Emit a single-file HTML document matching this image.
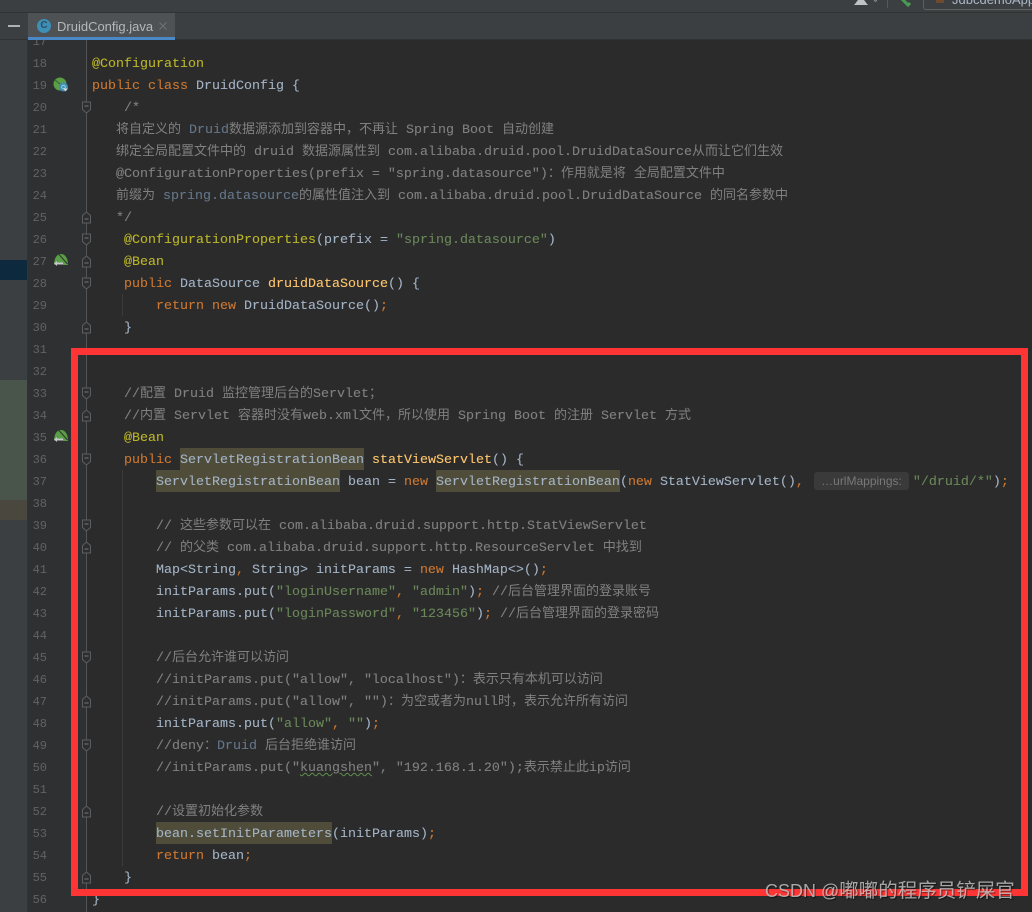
<!DOCTYPE html>
<html lang="zh">
<head>
<meta charset="utf-8">
<title>DruidConfig.java</title>
<style>
html,body{margin:0;padding:0;background:#2b2b2b}
#r{position:relative;width:1032px;height:912px;overflow:hidden;background:#2b2b2b;font-family:"Liberation Mono","DejaVu Sans Mono",monospace}
.abs{position:absolute}
#code{position:absolute;z-index:0;left:92px;top:54px;font-size:13.33px;line-height:22px;color:#a3b3c6;-webkit-text-stroke:.1px currentColor}
#code div{height:22px;white-space:pre}
#nums{position:absolute;left:27px;top:31px;width:20px;text-align:right;font-size:12px;line-height:22px;color:#606366}
#nums div{height:22px}
i{font-family:"Noto Sans CJK SC","WenQuanYi Zen Hei",sans-serif;font-style:normal;font-size:13px;line-height:0;-webkit-text-stroke:0;font-weight:400}
.k{color:#cc7832}.a{color:#bbb529}.s{color:#6a8759}.m{color:#ffc66d}.c{color:#808080}
.h{position:relative;display:inline-block;height:22px;line-height:22px;vertical-align:top}
.h::before{content:"";position:absolute;left:0;right:0;top:-2px;height:22px;background:#4f4d3a;z-index:-1}
.t{color:#64768a}
</style>
</head>
<body>
<div id="r">
<!-- left strip -->
<div class="abs" style="left:0;top:0;width:28px;height:912px;background:#3c3f41"></div>
<div class="abs" style="left:0;top:260px;width:27px;height:20px;background:#0d293e"></div>
<div class="abs" style="left:0;top:380px;width:27px;height:120px;background:#49544a"></div>
<div class="abs" style="left:0;top:500px;width:27px;height:20px;background:#49473e"></div>
<!-- gutter -->
<div class="abs" style="left:27px;top:40px;width:59px;height:872px;background:#2f3032"></div>
<div class="abs" style="left:27px;top:40px;width:1px;height:872px;background:#323232"></div>
<div id="nums">
<div>17</div><div>18</div><div>19</div><div>20</div><div>21</div><div>22</div><div>23</div><div>24</div><div>25</div><div>26</div><div>27</div><div>28</div><div>29</div><div>30</div><div>31</div><div>32</div><div>33</div><div>34</div><div>35</div><div>36</div><div>37</div><div>38</div><div>39</div><div>40</div><div>41</div><div>42</div><div>43</div><div>44</div><div>45</div><div>46</div><div>47</div><div>48</div><div>49</div><div>50</div><div>51</div><div>52</div><div>53</div><div>54</div><div>55</div><div>56</div>
</div>
<!-- guides -->
<div class="abs" style="left:86px;top:40px;width:1px;height:872px;background:#555"></div>
<div class="abs" style="left:122px;top:294px;width:1px;height:22px;background:#3b3b3b"></div>
<div class="abs" style="left:122px;top:470px;width:1px;height:396px;background:#3b3b3b"></div>
<!-- code -->
<div id="code">
<div><span class="a">@Configuration</span></div>
<div><span class="k">public class </span>DruidConfig {</div>
<div class="c">    /*</div>
<div class="c">   <i>将自定义的</i> <span class="t">Druid</span><i>数据源添加到容器中，不再让</i> Spring Boot <i>自动创建</i></div>
<div class="c">   <i>绑定全局配置文件中的</i> druid <i>数据源属性到</i> com.alibaba.druid.pool.DruidDataSource<i>从而让它们生效</i></div>
<div class="c">   @ConfigurationProperties(prefix = "spring.datasource")<i>：作用就是将</i> <i>全局配置文件中</i></div>
<div class="c">   <i>前缀为</i> <span class="t">spring.datasource</span><i>的属性值注入到</i> com.alibaba.druid.pool.DruidDataSource <i>的同名参数中</i></div>
<div class="c">   */</div>
<div>    <span class="a">@ConfigurationProperties</span>(prefix = <span class="s">"spring.datasource"</span>)</div>
<div>    <span class="a">@Bean</span></div>
<div>    <span class="k">public </span>DataSource <span class="m">druidDataSource</span>() {</div>
<div>        <span class="k">return new </span>DruidDataSource()<span class="k">;</span></div>
<div>    }</div>
<div> </div>
<div> </div>
<div class="c">    //<i>配置</i> Druid <i>监控管理后台的</i>Servlet<i>；</i></div>
<div class="c">    //<i>内置</i> Servlet <i>容器时没有</i>web.xml<i>文件，所以使用</i> Spring Boot <i>的注册</i> Servlet <i>方式</i></div>
<div>    <span class="a">@Bean</span></div>
<div>    <span class="k">public </span><span class="h">ServletRegistrationBean</span> <span class="m">statViewServlet</span>() {</div>
<div>        <span class="h">ServletRegistrationBean</span> bean = <span class="k">new </span><span class="h">ServletRegistrationBean</span>(<span class="k">new </span>StatViewServlet()<span class="k">,</span> <span style="display:inline-block;width:101px"></span><span class="s">"/druid/*"</span>)<span class="k">;</span></div>
<div> </div>
<div class="c">        // <i>这些参数可以在</i> com.alibaba.druid.support.http.StatViewServlet</div>
<div class="c">        // <i>的父类</i> com.alibaba.druid.support.http.ResourceServlet <i>中找到</i></div>
<div>        Map&lt;String<span class="k">,</span> String&gt; initParams = <span class="k">new </span>HashMap&lt;&gt;()<span class="k">;</span></div>
<div>        initParams.put(<span class="s">"loginUsername"</span><span class="k">,</span> <span class="s">"admin"</span>)<span class="k">;</span> <span class="c">//<i>后台管理界面的登录账号</i></span></div>
<div>        initParams.put(<span class="s">"loginPassword"</span><span class="k">,</span> <span class="s">"123456"</span>)<span class="k">;</span> <span class="c">//<i>后台管理界面的登录密码</i></span></div>
<div> </div>
<div class="c">        //<i>后台允许谁可以访问</i></div>
<div class="c">        //initParams.put("allow", "localhost")<i>：表示只有本机可以访问</i></div>
<div class="c">        //initParams.put("allow", "")<i>：为空或者为</i>null<i>时，表示允许所有访问</i></div>
<div>        initParams.put(<span class="s">"allow"</span><span class="k">,</span> <span class="s">""</span>)<span class="k">;</span></div>
<div class="c">        //deny<i>：</i><span class="t">Druid</span> <i>后台拒绝谁访问</i></div>
<div class="c">        //initParams.put("<span style="text-decoration:underline wavy #5f8f4f;text-decoration-thickness:1px">kuangshen</span>", "192.168.1.20");<i>表示禁止此</i>ip<i>访问</i></div>
<div> </div>
<div class="c">        //<i>设置初始化参数</i></div>
<div>        <span class="h">bean.setInitParameters</span>(initParams)<span class="k">;</span></div>
<div>        <span class="k">return </span>bean<span class="k">;</span></div>
<div>    }</div>
<div>}</div>
</div>
<!-- inlay hint -->
<div class="abs" style="left:814px;top:472px;width:95px;height:18px;background:#3a3a3a;border-radius:3px;font-family:'Liberation Sans',sans-serif;font-size:12px;line-height:18px;color:#787878;text-align:center;white-space:pre;z-index:1">…urlMappings:</div>
<!-- fold markers & gutter icons -->
<svg class="abs" style="left:0;top:0" width="1032" height="912" fill="none">
<defs>
<g id="d"><path d="M-4-5.500H4V2L0 5.500-4 2Z" fill="#2d2e2f" stroke="#5e5e5e"/><path d="M-2-1.500H2" stroke="#777"/></g>
<g id="u"><path d="M-4 5.500H4V-2L0-5.500-4-2Z" fill="#2d2e2f" stroke="#5e5e5e"/><path d="M-2 1.500H2" stroke="#777"/></g>
<g id="leaf"><path d="M54 265C54 258 57 254 61 254S68 258 68 265Z" fill="#5a9e45"/><path d="M59 254.500L67.500 264" stroke="#2f3032" stroke-width="1"/><path d="M54 264.500H63V266.500H54Z" fill="#2f3032"/><path d="M54 263.500L57 261V262.500H63V264.500H57V266L54 263.500Z" fill="#c4c8cc"/></g>
</defs>
<use href="#d" x="86.500" y="107.500"/><use href="#u" x="86.500" y="217.500"/>
<use href="#d" x="86.500" y="239.500"/><use href="#u" x="86.500" y="261.500"/>
<use href="#d" x="86.500" y="283.500"/><use href="#u" x="86.500" y="327.500"/>
<use href="#d" x="86.500" y="393.500"/><use href="#u" x="86.500" y="415.500"/>
<use href="#d" x="86.500" y="459.500"/><use href="#d" x="86.500" y="525.500"/>
<use href="#u" x="86.500" y="547.500"/><use href="#d" x="86.500" y="657.500"/>
<use href="#u" x="86.500" y="701.500"/><use href="#d" x="86.500" y="745.500"/>
<use href="#u" x="86.500" y="811.500"/><use href="#u" x="86.500" y="877.500"/>
<circle cx="60" cy="84" r="6.500" fill="#5a9e45"/>
<path d="M55 80L65 88" stroke="#35603a" stroke-width="1"/>
<circle cx="63.500" cy="87" r="4.500" fill="#3d8fb5"/>
<circle cx="63.500" cy="87" r="1.800" fill="none" stroke="#b8d8e6" stroke-width=".8"/>
<path d="M63 88.500H68L65.500 91.500Z" fill="#d0d4d8"/>
<use href="#leaf"/>
<use href="#leaf" y="176"/>
</svg>
<!-- top bars -->
<div class="abs" style="left:0;top:0;width:1032px;height:12px;background:#3c3f41;overflow:hidden;z-index:2">
<svg class="abs" style="left:850px;top:0" width="50" height="12"><path d="M4 5C6 3 7 1 8 0H14C15 1 16 3 18 5Z" fill="#c0c2c4"/><path d="M24 0L25.500 1.500 27 0" stroke="#8a8d8f" fill="none"/><path d="M37.500 0V8" stroke="#55585a"/></svg>
<svg class="abs" style="left:896px;top:0" width="20" height="12"><path d="M6-1L12 5 14 3" stroke="#499c54" stroke-width="3" fill="none"/></svg>
<div class="abs" style="left:923px;top:-10px;width:130px;height:18px;border:1px solid #5e6060;border-radius:3px;color:#a9b7c6;font-family:'Liberation Sans',sans-serif;font-size:13px;line-height:18px;white-space:pre;text-indent:28px">JdbcdemoApp</div>
<div class="abs" style="left:936px;top:-3px;width:8px;height:6px;background:#6e4a30"></div>
</div>
<div class="abs" style="left:0;top:12px;width:1032px;height:1px;background:#323232;z-index:2"></div>
<div class="abs" style="left:0;top:13px;width:1032px;height:26px;background:#3c3f41;z-index:2"></div>
<div class="abs" style="left:0;top:39px;width:1032px;height:1px;background:#323232;z-index:2"></div>
<div class="abs" style="left:8px;top:25px;width:12px;height:2px;background:#afb1b3;z-index:2"></div>
<div class="abs" style="left:28px;top:13px;width:147px;height:24px;background:#4e5254;z-index:2"></div>
<div class="abs" style="left:28px;top:37px;width:147px;height:3px;background:#4a88c7;z-index:2"></div>
<div class="abs" style="left:37px;top:19px;width:14px;height:14px;border-radius:50%;background:#3d8fb5;color:#2b4f60;font:700 10px/14px 'Liberation Sans',sans-serif;text-align:center;z-index:2">C</div>
<div class="abs" style="left:57px;top:17px;font-family:'Liberation Sans',sans-serif;font-size:13px;line-height:19px;color:#b4b8bb;white-space:pre;z-index:2">DruidConfig.java</div>
<svg class="abs" style="left:159px;top:22px;z-index:2" width="8" height="8"><path d="M.5.5L7.500 7.500M7.500.5L.5 7.500" stroke="#6f7274"/></svg>
<!-- red frame -->
<div class="abs" style="left:71px;top:348px;width:943px;height:534px;border:7px solid #ff3535;z-index:2"></div>
<!-- watermark -->
<div class="abs" style="left:765px;top:879px;font-family:'Liberation Sans','Noto Sans CJK SC',sans-serif;font-size:18px;line-height:24px;color:rgba(205,205,205,.78);text-shadow:1px 1px 1px rgba(0,0,0,.55);white-space:pre;z-index:3">CSDN @<span style="font-size:19.500px;line-height:0">嘟嘟的程序员铲屎官</span></div>
</div>
</body>
</html>
